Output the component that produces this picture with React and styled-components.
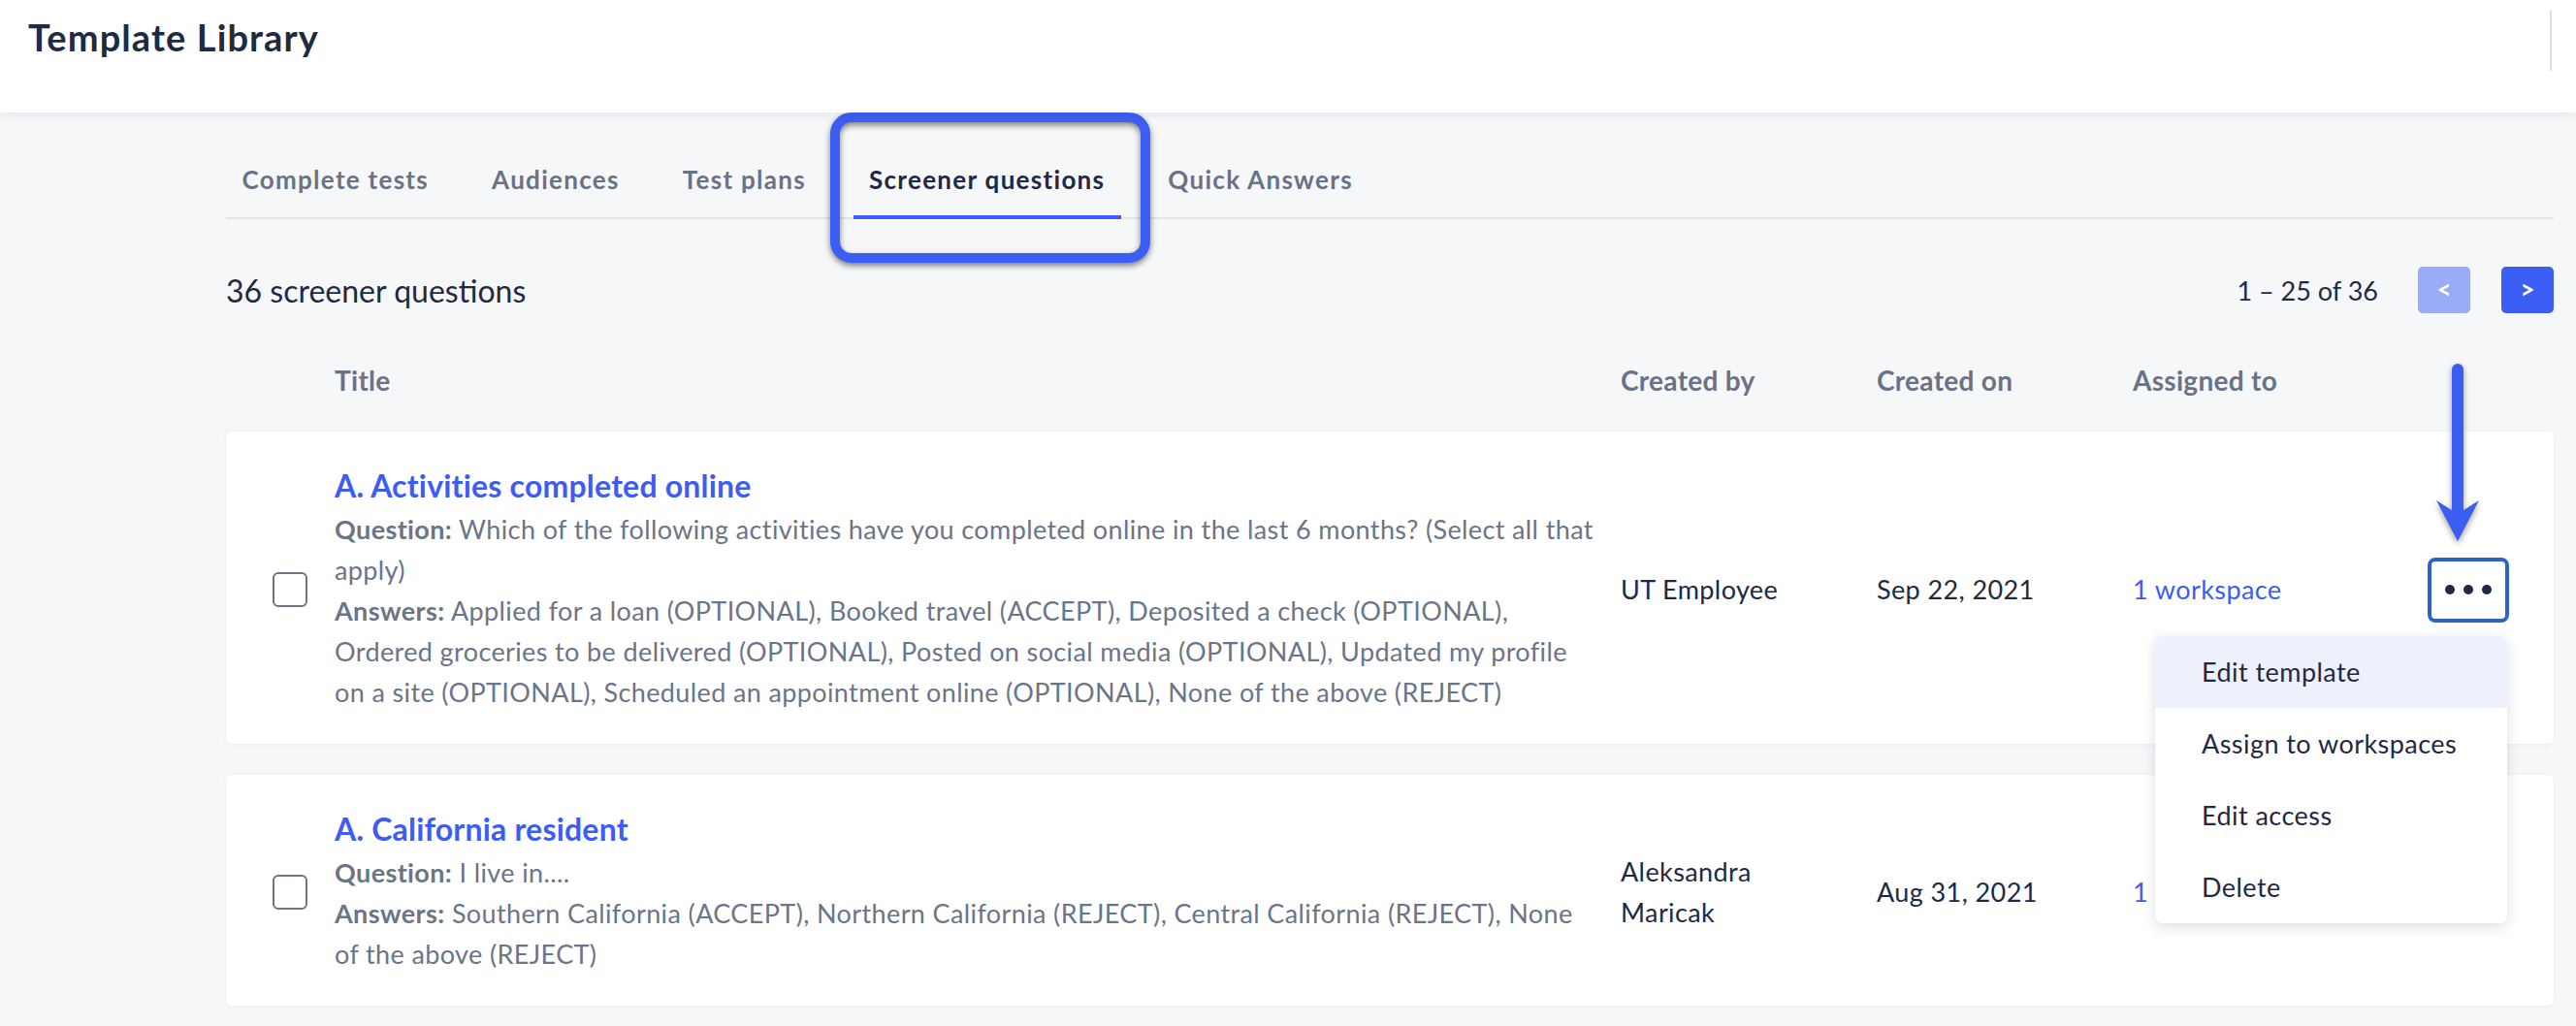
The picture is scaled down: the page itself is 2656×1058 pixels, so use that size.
import React from 'react';
import styled, { createGlobalStyle } from 'styled-components';

const GlobalStyle = createGlobalStyle`
  html, body { margin: 0; padding: 0; height: 100%; overflow: hidden; }
  body {
    background: #f6f7f9;
    font-family: Lato, "Noto Sans", sans-serif;
    color: #1e2a44;
    -webkit-font-smoothing: antialiased;
  }
  * { box-sizing: border-box; }
`;

const Header = styled.header`
  height: 116px;
  background: #fff;
  box-shadow: 0 2px 10px rgba(20, 30, 50, 0.08);
  display: flex;
  justify-content: space-between;
  align-items: flex-start;
  padding: 0 25px 0 29px;
  position: relative;
  z-index: 1;
`;

const PageTitle = styled.h1`
  margin: 16px 0 0;
  font-size: 38px;
  line-height: 44px;
  font-weight: 700;
  letter-spacing: 1.1px;
  color: #1e2b45;
`;

const HeaderDivider = styled.div`
  width: 2px;
  height: 62px;
  margin-top: 11px;
  background: #dcdee3;
`;

const Main = styled.main`
  padding: 0 23px 0 233px;
`;

const TabBar = styled.nav`
  margin-top: 34px;
  display: flex;
  gap: 32px;
  box-shadow: inset 0 -2px 0 #e2e4e8;
`;

const Tab = styled.div`
  position: relative;
  padding: 20px 16.5px 22px;
  font-size: 26px;
  line-height: 30px;
  font-weight: 700;
  letter-spacing: 1.3px;
  color: ${(p) => (p.$active ? '#1e2a44' : '#687387')};
  border-bottom: 4px solid ${(p) => (p.$active ? '#3b5ef5' : 'transparent')};
  white-space: nowrap;
`;

const HighlightBox = styled.div`
  position: absolute;
  left: -24px;
  right: -30px;
  top: -34px;
  bottom: -49px;
  border: 10px solid #3d5ef2;
  border-radius: 22px;
  filter: drop-shadow(0 3px 3px rgba(0, 0, 0, 0.5));
  pointer-events: none;
`;

const SummaryRow = styled.div`
  margin-top: 49px;
  height: 48px;
  display: flex;
  align-items: center;
  justify-content: space-between;
`;

const Count = styled.div`
  font-size: 32px;
  color: #1e2a44;
`;

const Pager = styled.div`
  display: flex;
  align-items: center;
  gap: 32px;
`;

const PageText = styled.span`
  font-size: 27px;
  color: #1e2a44;
  margin-right: 9px;
`;

const PageButton = styled.button`
  width: 54px;
  height: 48px;
  border: 0;
  border-radius: 5px;
  background: ${(p) => (p.$disabled ? '#9aabf7' : '#3b5ef5')};
  color: #fff;
  font-family: inherit;
  font-size: 26px;
  font-weight: 700;
  display: flex;
  align-items: center;
  justify-content: center;
  padding: 0 0 3px;
`;

const gridCols = `
  display: grid;
  grid-template-columns: 64px minmax(0, 1fr) 264px 264px 304px 84px;
`;

const HeaderRow = styled.div`
  ${gridCols}
  padding: 54px 46px 38px 48px;
`;

const HeaderCell = styled.div`
  grid-column: ${(p) => p.$col};
  font-size: 28px;
  line-height: 30px;
  font-weight: 700;
  letter-spacing: 0.3px;
  color: #687387;
`;

const CardList = styled.div`
  display: flex;
  flex-direction: column;
  gap: 32px;
`;

const Card = styled.div`
  ${gridCols}
  align-items: center;
  background: #fff;
  border-radius: 6px;
  padding: 36px 46px 32px 48px;
  box-shadow: 0 1px 4px rgba(20, 30, 50, 0.05);
`;

const Checkbox = styled.span`
  width: 36px;
  height: 36px;
  border: 2px solid #6b7588;
  border-radius: 6px;
  background: #fff;
`;

const TitleCell = styled.div`
  padding-right: 27px;
`;

const CardTitle = styled.a`
  display: block;
  font-size: 32px;
  line-height: 40px;
  font-weight: 700;
  letter-spacing: 0.2px;
  color: #3d5cf5;
  margin-bottom: 4px;
`;

const Detail = styled.p`
  margin: 0;
  font-size: 27px;
  line-height: 42px;
  letter-spacing: 0.38px;
  color: #6b7588;
  strong { font-weight: 700; }
`;

const Cell = styled.div`
  font-size: 27px;
  line-height: 42px;
  letter-spacing: 0.4px;
  color: ${(p) => (p.$link ? '#3d5cf5' : '#1e2a44')};
  max-width: ${(p) => p.$max || 'none'};
`;

const ActionCell = styled.div`
  position: relative;
  justify-self: start;
  min-height: 67px;
`;

const Kebab = styled.button`
  width: 84px;
  height: 67px;
  border: 4px solid #2d63c9;
  border-radius: 8px;
  background: #fff;
  display: flex;
  align-items: center;
  justify-content: center;
  gap: 9px;
  padding: 0;
`;

const Dot = styled.span`
  width: 10px;
  height: 10px;
  border-radius: 50%;
  background: #1e2a44;
`;

const Menu = styled.div`
  position: absolute;
  top: calc(100% + 14px);
  right: 2px;
  width: 363px;
  background: #fff;
  border-radius: 8px;
  overflow: hidden;
  box-shadow: 0 4px 14px rgba(20, 30, 50, 0.14);
  z-index: 10;
`;

const MenuItem = styled.div`
  height: 74px;
  display: flex;
  align-items: center;
  padding-left: 48px;
  font-size: 27px;
  letter-spacing: 0.45px;
  color: #1e2a44;
  background: ${(p) => (p.$active ? '#edf1fc' : '#fff')};
  white-space: nowrap;
`;

const ArrowSvg = styled.svg`
  position: absolute;
  left: 1px;
  top: -200px;
  width: 60px;
  height: 190px;
  overflow: visible;
  filter: drop-shadow(0 3px 3px rgba(0, 0, 0, 0.4));
  pointer-events: none;
`;

const tabs = ['Complete tests', 'Audiences', 'Test plans', 'Screener questions', 'Quick Answers'];

const rows = [
  {
    title: 'A. Activities completed online',
    question:
      'Which of the following activities have you completed online in the last 6 months? (Select all that apply)',
    answers:
      'Applied for a loan (OPTIONAL), Booked travel (ACCEPT), Deposited a check (OPTIONAL), Ordered groceries to be delivered (OPTIONAL), Posted on social media (OPTIONAL), Updated my profile on a site (OPTIONAL), Scheduled an appointment online (OPTIONAL), None of the above (REJECT)',
    by: 'UT Employee',
    on: 'Sep 22, 2021',
    menu: true,
  },
  {
    title: 'A. California resident',
    question: 'I live in....',
    answers:
      'Southern California (ACCEPT), Northern California (REJECT), Central California (REJECT), None of the above (REJECT)',
    by: 'Aleksandra Maricak',
    on: 'Aug 31, 2021',
  },
];

export default function App() {
  return (
    <>
      <GlobalStyle />
      <Header>
        <PageTitle>Template Library</PageTitle>
        <HeaderDivider />
      </Header>
      <Main>
        <TabBar>
          {tabs.map((t) => (
            <Tab key={t} $active={t === 'Screener questions'}>
              {t}
              {t === 'Screener questions' && <HighlightBox />}
            </Tab>
          ))}
        </TabBar>
        <SummaryRow>
          <Count>36 screener questions</Count>
          <Pager>
            <PageText>1 – 25 of 36</PageText>
            <PageButton $disabled>&lt;</PageButton>
            <PageButton>&gt;</PageButton>
          </Pager>
        </SummaryRow>
        <HeaderRow>
          <HeaderCell $col={2}>Title</HeaderCell>
          <HeaderCell $col={3}>Created by</HeaderCell>
          <HeaderCell $col={4}>Created on</HeaderCell>
          <HeaderCell $col={5}>Assigned to</HeaderCell>
        </HeaderRow>
        <CardList>
          {rows.map((r) => (
            <Card key={r.title}>
              <Checkbox />
              <TitleCell>
                <CardTitle>{r.title}</CardTitle>
                <Detail>
                  <strong>Question:</strong> {r.question}
                </Detail>
                <Detail>
                  <strong>Answers:</strong> {r.answers}
                </Detail>
              </TitleCell>
              <Cell $max="200px">{r.by}</Cell>
              <Cell>{r.on}</Cell>
              <Cell $link>1 workspace</Cell>
              <ActionCell>
                {r.menu && (
                  <>
                    <ArrowSvg viewBox="0 0 60 190">
                      <line x1="30" y1="6" x2="30" y2="152" stroke="#3b5ef0" strokeWidth="12" strokeLinecap="round" />
                      <polygon points="8,141 30,155 52,141 30,183" fill="#3b5ef0" />
                    </ArrowSvg>
                    <Kebab aria-label="More actions">
                      <Dot />
                      <Dot />
                      <Dot />
                    </Kebab>
                    <Menu>
                      <MenuItem $active>Edit template</MenuItem>
                      <MenuItem>Assign to workspaces</MenuItem>
                      <MenuItem>Edit access</MenuItem>
                      <MenuItem>Delete</MenuItem>
                    </Menu>
                  </>
                )}
              </ActionCell>
            </Card>
          ))}
        </CardList>
      </Main>
    </>
  );
}
